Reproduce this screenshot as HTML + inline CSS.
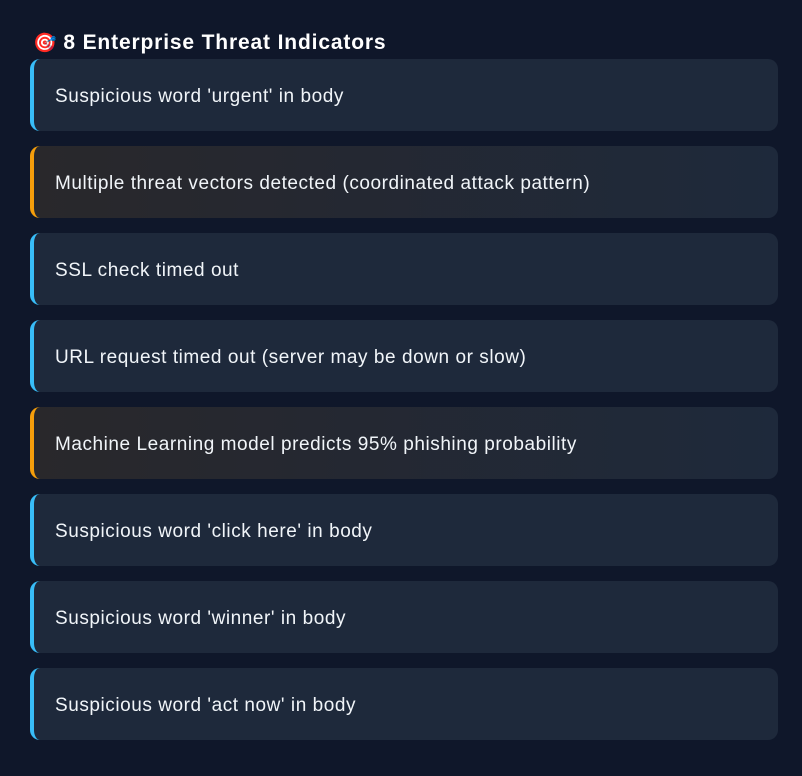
<!DOCTYPE html>
<html><head><style>
body{margin:0;background:#0f172a;width:802px;height:776px;overflow:hidden;font-family:"Liberation Sans",sans-serif;}
h3{position:absolute;left:33px;top:30px;margin:0;color:#fff;font-size:21px;font-weight:bold;line-height:26px;letter-spacing:0.85px;}
.c{position:absolute;left:30px;width:748px;height:72px;background:#1e293b;border-left:4px solid #38bdf8;border-radius:10px;box-sizing:border-box;color:#f1f5f9;font-size:19px;line-height:76px;padding-left:21px;letter-spacing:0.55px;}
.o{border-left-color:#f59e0b;background:linear-gradient(90deg,#29282b,#1e293b);}
</style></head><body>
<h3><span style="font-size:19px;letter-spacing:0">🎯</span>&nbsp;8 Enterprise Threat Indicators</h3>
<div class="c" style="top:59px">Suspicious word 'urgent' in body</div>
<div class="c o" style="top:146px">Multiple threat vectors detected (coordinated attack pattern)</div>
<div class="c" style="top:233px">SSL check timed out</div>
<div class="c" style="top:320px">URL request timed out (server may be down or slow)</div>
<div class="c o" style="top:407px">Machine Learning model predicts 95% phishing probability</div>
<div class="c" style="top:494px">Suspicious word 'click here' in body</div>
<div class="c" style="top:581px">Suspicious word 'winner' in body</div>
<div class="c" style="top:668px">Suspicious word 'act now' in body</div>
</body></html>
